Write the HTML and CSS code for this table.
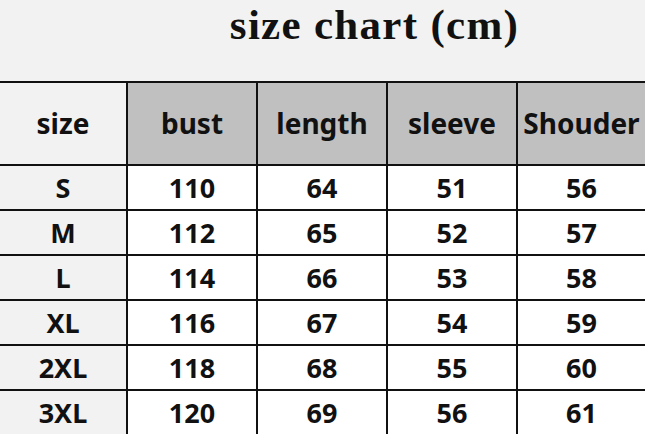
FILE: index.html
```html
<!DOCTYPE html>
<html>
<head>
<meta charset="utf-8">
<link rel="stylesheet" href="styles.css">
</head>
<body>
<div class="title-bar"><h1 class="title">size chart (cm)</h1></div>
<div class="chart">
  <div class="cell head first">size</div>
  <div class="cell head gray">bust</div>
  <div class="cell head gray">length</div>
  <div class="cell head gray">sleeve</div>
  <div class="cell head gray last">Shouder</div>

  <div class="cell first">S</div><div class="cell">110</div><div class="cell">64</div><div class="cell">51</div><div class="cell last">56</div>
  <div class="cell first">M</div><div class="cell">112</div><div class="cell">65</div><div class="cell">52</div><div class="cell last">57</div>
  <div class="cell first">L</div><div class="cell">114</div><div class="cell">66</div><div class="cell">53</div><div class="cell last">58</div>
  <div class="cell first">XL</div><div class="cell">116</div><div class="cell">67</div><div class="cell">54</div><div class="cell last">59</div>
  <div class="cell first">2XL</div><div class="cell">118</div><div class="cell">68</div><div class="cell">55</div><div class="cell last">60</div>
  <div class="cell first">3XL</div><div class="cell">120</div><div class="cell">69</div><div class="cell">56</div><div class="cell last">61</div>
</div>
</body>
</html>
```

FILE: styles.css
```css
html, body {
  margin: 0;
  padding: 0;
  background: #f2f2f2;
  overflow: hidden;
}
body {
  width: 645px;
  height: 434px;
}
.title-bar {
  height: 81px;
  display: flex;
  justify-content: center;
  padding-left: 104px;
  box-sizing: border-box;
}
.title {
  margin: 0;
  font-family: "Liberation Serif", "Times New Roman", serif;
  font-weight: bold;
  font-size: 43px;
  line-height: 50px;
  letter-spacing: 1.3px;
  color: #111;
}
.chart {
  display: grid;
  grid-template-columns: 128px 130px 130px 130px 1fr;
  grid-template-rows: 83px repeat(6, 45px);
  border-top: 2px solid #111;
  font-family: "Noto Sans", "Open Sans", sans-serif;
  font-weight: bold;
  color: #111;
}
.cell {
  box-sizing: border-box;
  border-right: 2px solid #111;
  border-bottom: 2px solid #111;
  background: #fff;
  display: flex;
  align-items: center;
  justify-content: center;
  font-size: 27px;
  padding-top: 0;
}
.cell.head {
  font-size: 28px;
  padding-bottom: 2px;
}
.cell.first {
  background: #f2f2f2;
}
.cell.gray {
  background: #c0c0c0;
}
.cell.last {
  border-right: none;
}
```
